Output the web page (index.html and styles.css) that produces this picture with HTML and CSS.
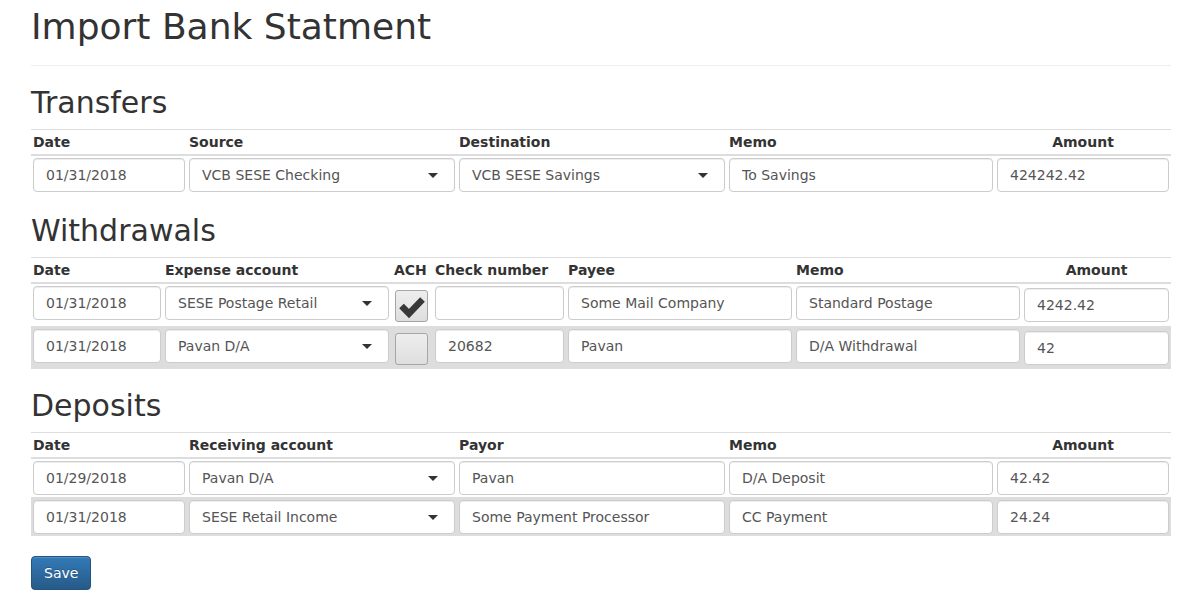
FILE: index.html
```html
<!DOCTYPE html>
<html lang="en">
<head>
<meta charset="utf-8">
<title>Import Bank Statment</title>
<link rel="stylesheet" href="styles.css">
</head>
<body>
<div class="container">
  <div class="page-header">
    <h1>Import Bank Statment</h1>
  </div>

  <h2>Transfers</h2>
  <table class="grid">
    <colgroup>
      <col class="w156"><col class="w270"><col class="w270"><col class="w268"><col class="w176">
    </colgroup>
    <thead>
      <tr><th>Date</th><th>Source</th><th>Destination</th><th>Memo</th><th class="center">Amount</th></tr>
    </thead>
    <tbody>
      <tr>
        <td><input class="field" type="text" value="01/31/2018"></td>
        <td><div class="sel"><select class="field"><option>VCB SESE Checking</option></select></div></td>
        <td><div class="sel"><select class="field"><option>VCB SESE Savings</option></select></div></td>
        <td><input class="field" type="text" value="To Savings"></td>
        <td><input class="field" type="text" value="424242.42"></td>
      </tr>
    </tbody>
  </table>

  <h2>Withdrawals</h2>
  <table class="grid">
    <colgroup>
      <col class="w132"><col class="w228"><col class="w42"><col class="w133"><col class="w228"><col class="w228"><col class="w149">
    </colgroup>
    <thead>
      <tr><th>Date</th><th>Expense account</th><th class="ach-head">ACH</th><th>Check number</th><th>Payee</th><th>Memo</th><th class="center">Amount</th></tr>
    </thead>
    <tbody>
      <tr>
        <td><input class="field" type="text" value="01/31/2018"></td>
        <td><div class="sel"><select class="field"><option>SESE Postage Retail</option></select></div></td>
        <td><span class="ach-box"><svg viewBox="0 0 33 32" width="33" height="32" aria-hidden="true"><polyline points="6.5,16 14,23.5 27.5,9.5" /></svg></span></td>
        <td><input class="field" type="text" value=""></td>
        <td><input class="field" type="text" value="Some Mail Company"></td>
        <td><input class="field" type="text" value="Standard Postage"></td>
        <td class="middle"><input class="field" type="text" value="4242.42"></td>
      </tr>
      <tr class="shade">
        <td><input class="field" type="text" value="01/31/2018"></td>
        <td><div class="sel"><select class="field"><option>Pavan D/A</option></select></div></td>
        <td><span class="ach-box"></span></td>
        <td><input class="field" type="text" value="20682"></td>
        <td><input class="field" type="text" value="Pavan"></td>
        <td><input class="field" type="text" value="D/A Withdrawal"></td>
        <td class="middle"><input class="field" type="text" value="42"></td>
      </tr>
    </tbody>
  </table>

  <h2>Deposits</h2>
  <table class="grid">
    <colgroup>
      <col class="w156"><col class="w270"><col class="w270"><col class="w268"><col class="w176">
    </colgroup>
    <thead>
      <tr><th>Date</th><th>Receiving account</th><th>Payor</th><th>Memo</th><th class="center">Amount</th></tr>
    </thead>
    <tbody>
      <tr>
        <td><input class="field" type="text" value="01/29/2018"></td>
        <td><div class="sel"><select class="field"><option>Pavan D/A</option></select></div></td>
        <td><input class="field" type="text" value="Pavan"></td>
        <td><input class="field" type="text" value="D/A Deposit"></td>
        <td><input class="field" type="text" value="42.42"></td>
      </tr>
      <tr class="shade">
        <td><input class="field" type="text" value="01/31/2018"></td>
        <td><div class="sel"><select class="field"><option>SESE Retail Income</option></select></div></td>
        <td><input class="field" type="text" value="Some Payment Processor"></td>
        <td><input class="field" type="text" value="CC Payment"></td>
        <td><input class="field" type="text" value="24.24"></td>
      </tr>
    </tbody>
  </table>

  <button class="btn-save" type="button">Save</button>
</div>
</body>
</html>
```

FILE: styles.css
```css
html, body {
  margin: 0;
  padding: 0;
  background: #fff;
}

body {
  font-family: "DejaVu Sans", "Liberation Sans", sans-serif;
  font-size: 14px;
  line-height: 20px;
  color: #333;
}

.container {
  width: 1170px;
  margin: 0 auto;
  padding: 0 15px;
  box-sizing: border-box;
}

.page-header {
  margin: 0 0 20px;
  padding-bottom: 8px;
  border-bottom: 1px solid #eee;
}

h1 {
  font-size: 36px;
  font-weight: normal;
  line-height: 1.1;
  margin: 7px 0 10px;
}

h2 {
  font-size: 30px;
  font-weight: normal;
  line-height: 1.1;
  margin: 20px 0 10px;
}

.grid {
  width: 100%;
  border-collapse: collapse;
  border-spacing: 0;
  table-layout: fixed;
  margin-bottom: 20px;
}

.w42 { width: 42px; }
.w132 { width: 132px; }
.w133 { width: 133px; }
.w149 { width: 149px; }
.w156 { width: 156px; }
.w176 { width: 176px; }
.w228 { width: 228px; }
.w268 { width: 268px; }
.w270 { width: 270px; }

.grid th {
  padding: 2px;
  text-align: left;
  font-weight: bold;
  line-height: 20px;
  vertical-align: bottom;
  border-top: 1px solid #ddd;
  border-bottom: 2px solid #ddd;
  white-space: nowrap;
}

.grid th.center {
  text-align: center;
}

.grid th.ach-head {
  padding-left: 3px;
}

.grid td {
  padding: 2px;
  vertical-align: top;
  border-top: 1px solid #ddd;
}

.grid td.middle {
  vertical-align: middle;
}

.grid tr.shade td {
  background: #ddd;
}

.field {
  display: block;
  width: 100%;
  height: 34px;
  box-sizing: border-box;
  padding: 6px 12px;
  font-family: "DejaVu Sans", "Liberation Sans", sans-serif;
  font-size: 14px;
  line-height: 20px;
  color: #555;
  background: #fff;
  border: 1px solid #ccc;
  border-radius: 4px;
  box-shadow: inset 0 1px 1px rgba(0, 0, 0, 0.075);
  margin: 0;
  outline: none;
}

select.field {
  -webkit-appearance: none;
  appearance: none;
  color: #555;
  padding-right: 30px;
}

.sel {
  position: relative;
}

.sel::after {
  content: "";
  position: absolute;
  right: 17px;
  top: 15px;
  width: 0;
  height: 0;
  border-left: 5px solid transparent;
  border-right: 5px solid transparent;
  border-top: 5px solid #333;
  pointer-events: none;
}

.ach-box {
  display: block;
  width: 33px;
  height: 32px;
  margin: 4px 0 2px 2px;
  box-sizing: border-box;
  border: 1px solid #a6a6a6;
  border-radius: 3px;
  background: linear-gradient(to bottom, #eeeeee 0%, #dedede 100%);
  overflow: hidden;
}

.ach-box svg {
  display: block;
  margin: -1px 0 0 -1px;
}

.ach-box polyline {
  fill: none;
  stroke: #383838;
  stroke-width: 6.5;
  stroke-linejoin: miter;
  stroke-linecap: butt;
}

.btn-save {
  display: inline-block;
  height: 34px;
  padding: 6px 12px;
  font-family: "DejaVu Sans", "Liberation Sans", sans-serif;
  font-size: 14px;
  line-height: 20px;
  color: #fff;
  text-shadow: 0 -1px 0 rgba(0, 0, 0, 0.2);
  background-color: #265a88;
  background-image: linear-gradient(to bottom, #337ab7 0%, #265a88 100%);
  border: 1px solid #245580;
  border-radius: 4px;
  box-shadow: inset 0 1px 0 rgba(255, 255, 255, 0.15), 0 1px 1px rgba(0, 0, 0, 0.075);
  cursor: pointer;
  box-sizing: border-box;
}
```
